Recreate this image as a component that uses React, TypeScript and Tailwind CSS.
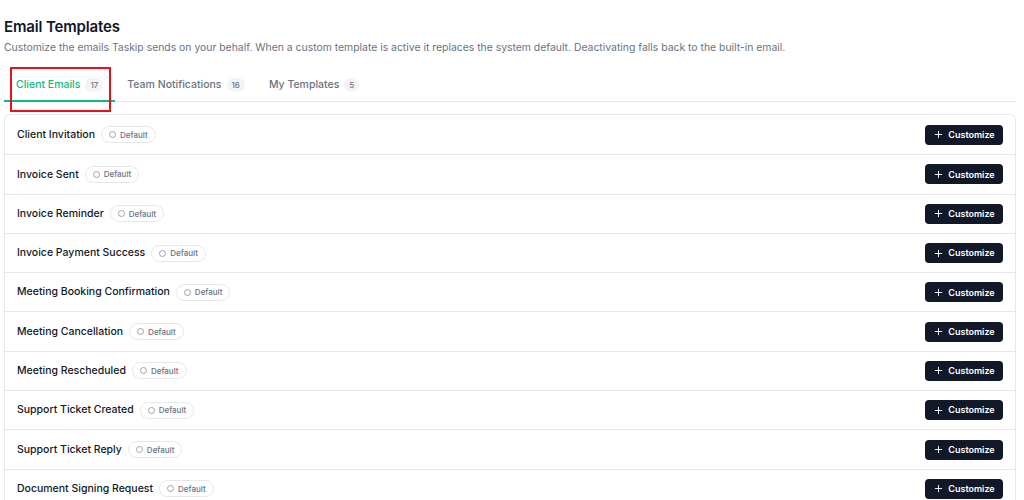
import { Plus } from "lucide-react";

const templates = [
  "Client Invitation",
  "Invoice Sent",
  "Invoice Reminder",
  "Invoice Payment Success",
  "Meeting Booking Confirmation",
  "Meeting Cancellation",
  "Meeting Rescheduled",
  "Support Ticket Created",
  "Support Ticket Reply",
  "Document Signing Request",
];

const tabs = [
  { label: "Client Emails", count: 17, active: true },
  { label: "Team Notifications", count: 16, active: false },
  { label: "My Templates", count: 5, active: false },
];

export default function App() {
  return (
    <div className="h-[500px] overflow-hidden bg-white px-1 pt-[16px] font-['Inter',sans-serif] text-[#111827]">
      <h1 className="text-[15px] font-semibold leading-[22px] tracking-[-0.01em]">Email Templates</h1>
      <p className="mt-[3px] text-[10.4px] leading-[14px] text-[#6b7280]">
        Customize the emails Taskip sends on your behalf. When a custom template is active it replaces the system default. Deactivating falls back to the built-in email.
      </p>

      <div className="relative mt-[15px] mr-1 flex border-b border-[#e5e7eb]">
        {tabs.map((tab) => (
          <button
            key={tab.label}
            className={
              tab.active
                ? "relative -mb-px flex h-[32px] items-center gap-[5px] border-b-2 border-[#10b981] px-3 text-[10.5px] font-medium text-[#10b981]"
                : "relative -mb-px flex h-[32px] items-center gap-[5px] border-b-2 border-transparent px-3 text-[10.5px] font-medium text-[#6b7280]"
            }
          >
            {tab.label}
            <span className="rounded-full bg-[#f3f4f6] px-[5px] text-[8px] leading-[14px] text-[#6b7280]">{tab.count}</span>
            {tab.active && (
              <span className="pointer-events-none absolute -top-[3px] left-[6px] h-[45px] w-[101px] border-2 border-[#e8101a]" />
            )}
          </button>
        ))}
      </div>

      <div className="mt-[12px] mr-1 rounded-md border border-[#e5e7eb]">
        {templates.map((name, i) => (
          <div
            key={name}
            className={
              i === 0
                ? "flex h-[39.3px] items-center justify-between pl-3 pr-3"
                : "flex h-[39.3px] items-center justify-between border-t border-[#e5e7eb] pl-3 pr-3"
            }
          >
            <div className="flex items-center gap-[6px]">
              <span className="text-[10.5px] font-medium text-[#111827]">{name}</span>
              <span className="flex h-[17px] items-center gap-[4px] rounded-full border border-[#e5e7eb] px-[7px] text-[8px] font-medium text-[#6b7280]">
                <span className="h-[7px] w-[7px] rounded-full border border-[#9ca3af]" />
                Default
              </span>
            </div>
            <button className="flex h-[20px] w-[78px] items-center justify-center gap-[4px] rounded-[4px] bg-[#111827] text-[9px] font-semibold text-white">
              <Plus className="h-[11px] w-[11px]" strokeWidth={2} />
              Customize
            </button>
          </div>
        ))}
      </div>
    </div>
  );
}
